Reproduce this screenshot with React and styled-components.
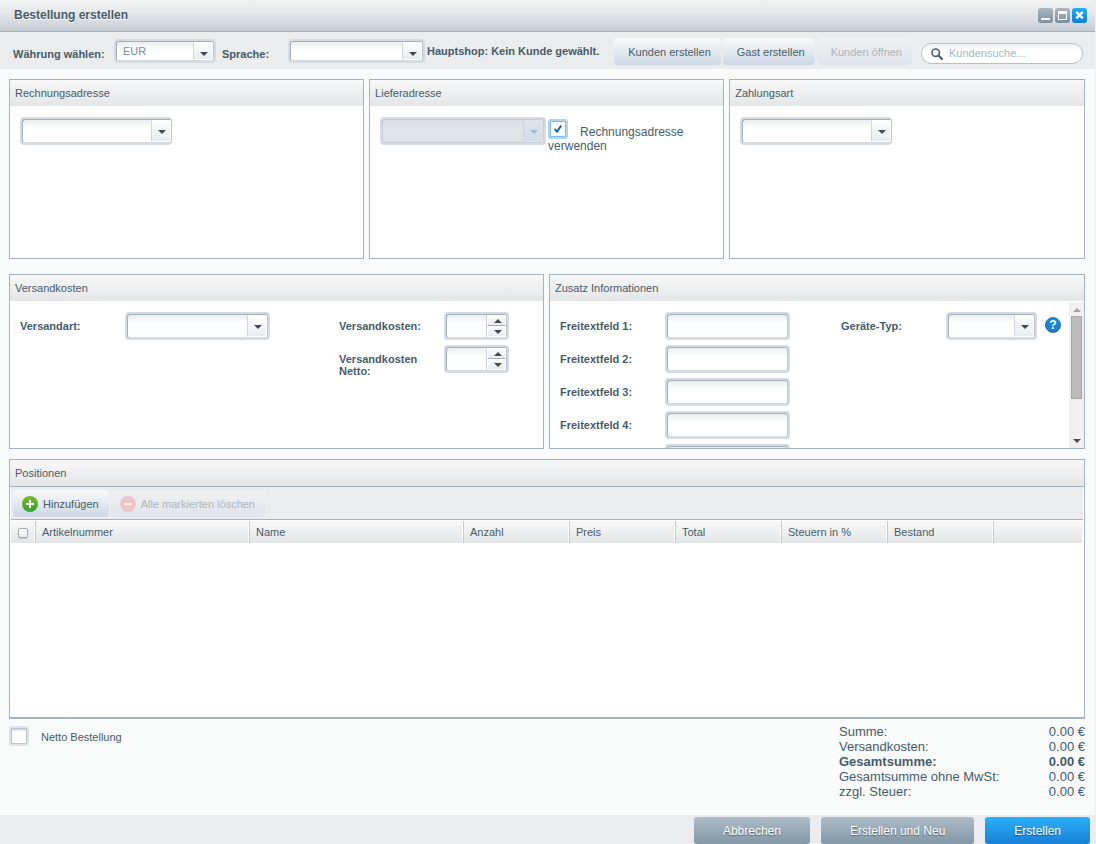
import { useState } from "react";
import styled, { createGlobalStyle, css } from "styled-components";

const columns = [
  { title: "Artikelnummer", width: 214 },
  { title: "Name", width: 214 },
  { title: "Anzahl", width: 106 },
  { title: "Preis", width: 106 },
  { title: "Total", width: 106 },
  { title: "Steuern in %", width: 106 },
  { title: "Bestand", width: 106 },
];

const totals = [
  { label: "Summe:", value: "0.00 €" },
  { label: "Versandkosten:", value: "0.00 €" },
  { label: "Gesamtsumme:", value: "0.00 €", strong: true },
  { label: "Gesamtsumme ohne MwSt:", value: "0.00 €" },
  { label: "zzgl. Steuer:", value: "0.00 €" },
];

const freeTexts = [1, 2, 3, 4];

const Arrow = ({ up }) => (
  <svg width="8" height="4" viewBox="0 0 8 4" aria-hidden="true">
    <path d={up ? "M0 4 L4 0 L8 4 Z" : "M0 0 L4 4 L8 0 Z"} fill="currentColor" />
  </svg>
);

const Combo = ({ id, label, width, small, open, disabled, children }) => (
  <Frame $width={width} $small={small} $open={open} $disabled={disabled}>
    <Select id={id} aria-label={label} disabled={disabled}>
      {children || <option value=""></option>}
    </Select>
    <Trigger $small={small} $disabled={disabled}>
      <Arrow />
    </Trigger>
  </Frame>
);

const Spinner = ({ id }) => {
  const [value, setValue] = useState("");
  const step = (n) => setValue(String((Number(value) || 0) + n));

  return (
    <Frame $width={65}>
      <Input id={id} value={value} onChange={(e) => setValue(e.target.value)} />
      <Steps>
        <Step type="button" aria-label="Erhöhen" onClick={() => step(1)}>
          <Arrow up />
        </Step>
        <Step type="button" aria-label="Verringern" onClick={() => step(-1)}>
          <Arrow />
        </Step>
      </Steps>
    </Frame>
  );
};

const PlusIcon = () => (
  <svg width="16" height="16" viewBox="0 0 16 16" aria-hidden="true">
    <defs>
      <linearGradient id="plus" x1="0" y1="0" x2="0" y2="1">
        <stop offset="0" stopColor="#7fb92f" />
        <stop offset="1" stopColor="#33a02f" />
      </linearGradient>
    </defs>
    <circle cx="8" cy="8" r="8" fill="url(#plus)" />
    <path d="M8 4v8M4 8h8" stroke="#fff" strokeWidth="2" />
  </svg>
);

const MinusIcon = () => (
  <svg width="16" height="16" viewBox="0 0 16 16" aria-hidden="true">
    <circle cx="8" cy="8" r="8" fill="#ecc6c9" />
    <path d="M4 8h8" stroke="#f7ecee" strokeWidth="2" />
  </svg>
);

const SearchIcon = () => (
  <svg width="12" height="12" viewBox="0 0 12 12" aria-hidden="true">
    <circle cx="4.7" cy="4.7" r="3.7" fill="none" stroke="#52616e" strokeWidth="1.7" />
    <path d="M7.4 7.4 L11 11" stroke="#52616e" strokeWidth="2.2" strokeLinecap="round" />
  </svg>
);

export default function App() {
  const [sameAddress, setSameAddress] = useState(true);

  return (
    <>
      <GlobalStyle />
      <Window>
        <TitleBar>
          <Title>Bestellung erstellen</Title>
          <Tools>
            <Tool type="button" aria-label="Minimieren">
              <svg width="15" height="15" viewBox="0 0 15 15">
                <path d="M3 10h9v2H3z" fill="#fff" />
              </svg>
            </Tool>
            <Tool type="button" aria-label="Maximieren">
              <svg width="15" height="15" viewBox="0 0 15 15">
                <path d="M3 3h9v9H3z M4 6v5h7V6z" fill="#fff" fillRule="evenodd" />
              </svg>
            </Tool>
            <Tool type="button" aria-label="Schließen" $primary>
              <svg width="15" height="15" viewBox="0 0 15 15">
                <path d="M4.3 3.8 L10.7 10.4 M10.7 3.8 L4.3 10.4" stroke="#fff" strokeWidth="2.4" />
              </svg>
            </Tool>
          </Tools>
        </TitleBar>

        <Toolbar>
          <ToolbarLabel htmlFor="currency" $width={101}>
            Währung wählen:
          </ToolbarLabel>
          <Combo id="currency" width={102} small>
            <option>EUR</option>
          </Combo>
          <ToolbarLabel htmlFor="language" $width={66} $indent>
            Sprache:
          </ToolbarLabel>
          <Combo id="language" width={137} small />
          <ShopInfo>Hauptshop: Kein Kunde gewählt.</ShopInfo>
          <CustomerActions>
            <SoftButton type="button">Kunden erstellen</SoftButton>
            <SoftButton type="button">Gast erstellen</SoftButton>
            <SoftButton type="button" disabled>
              Kunden öffnen
            </SoftButton>
          </CustomerActions>
          <Search>
            <SearchIcon />
            <input type="text" aria-label="Kundensuche" placeholder="Kundensuche..." />
          </Search>
        </Toolbar>

        <Main>
          <AddressRow>
            <Panel>
              <PanelTitle>Rechnungsadresse</PanelTitle>
              <PanelBody>
                <Combo label="Rechnungsadresse" width={152} open />
              </PanelBody>
            </Panel>
            <Panel>
              <PanelTitle>Lieferadresse</PanelTitle>
              <PanelBody>
                <Combo label="Lieferadresse" width={166} disabled={sameAddress} />
                <SameAddress>
                  <Check
                    type="checkbox"
                    checked={sameAddress}
                    onChange={(e) => setSameAddress(e.target.checked)}
                  />
                  Rechnungsadresse verwenden
                </SameAddress>
              </PanelBody>
            </Panel>
            <Panel>
              <PanelTitle>Zahlungsart</PanelTitle>
              <PanelBody>
                <Combo label="Zahlungsart" width={152} open />
              </PanelBody>
            </Panel>
          </AddressRow>

          <DetailRow>
            <Panel>
              <PanelTitle>Versandkosten</PanelTitle>
              <FormBody $second={195}>
                <Fields>
                  <Field>
                    <FieldLabel htmlFor="dispatch">Versandart:</FieldLabel>
                    <Combo id="dispatch" width={145} />
                  </Field>
                </Fields>
                <Fields>
                  <Field>
                    <FieldLabel htmlFor="shipping">Versandkosten:</FieldLabel>
                    <Spinner id="shipping" />
                  </Field>
                  <Field>
                    <FieldLabel htmlFor="shippingNet">Versandkosten Netto:</FieldLabel>
                    <Spinner id="shippingNet" />
                  </Field>
                </Fields>
              </FormBody>
            </Panel>
            <Panel>
              <PanelTitle>Zusatz Informationen</PanelTitle>
              <ScrollArea>
                <FormBody $second={220} $scroll>
                  <Fields>
                    {freeTexts.map((n) => (
                      <Field key={n}>
                        <FieldLabel htmlFor={`free${n}`}>Freitextfeld {n}:</FieldLabel>
                        <Frame $width={125}>
                          <Input id={`free${n}`} />
                        </Frame>
                      </Field>
                    ))}
                    <Field>
                      <FieldLabel as="span" />
                      <Frame $width={125}>
                        <Input aria-label="Freitextfeld 5" />
                      </Frame>
                    </Field>
                  </Fields>
                  <Fields>
                    <Field>
                      <FieldLabel htmlFor="device">Geräte-Typ:</FieldLabel>
                      <Combo id="device" width={91} />
                      <Help type="button" aria-label="Hilfe">
                        ?
                      </Help>
                    </Field>
                  </Fields>
                </FormBody>
                <ScrollBar aria-hidden="true">
                  <ScrollEnd $muted>
                    <Arrow up />
                  </ScrollEnd>
                  <Thumb />
                  <ScrollEnd $last>
                    <Arrow />
                  </ScrollEnd>
                </ScrollBar>
              </ScrollArea>
            </Panel>
          </DetailRow>

          <Positions>
            <PanelTitle $line>Positionen</PanelTitle>
            <GridToolbar>
              <SoftButton type="button" $icon>
                <PlusIcon />
                Hinzufügen
              </SoftButton>
              <SoftButton type="button" $icon disabled>
                <MinusIcon />
                Alle markierten löschen
              </SoftButton>
            </GridToolbar>
            <Table>
              <colgroup>
                <col width="24" />
                {columns.map((c) => (
                  <col key={c.title} width={c.width} />
                ))}
                <col />
              </colgroup>
              <thead>
                <tr>
                  <Th $check>
                    <SelectAll type="checkbox" aria-label="Alle markieren" />
                  </Th>
                  {columns.map((c) => (
                    <Th key={c.title}>{c.title}</Th>
                  ))}
                  <Th as="td" />
                </tr>
              </thead>
            </Table>
          </Positions>

          <Summary>
            <NetOrder>
              <Check type="checkbox" />
              Netto Bestellung
            </NetOrder>
            <Totals>
              {totals.map((t) => (
                <Total key={t.label} $strong={t.strong}>
                  <dt>{t.label}</dt>
                  <dd>{t.value}</dd>
                </Total>
              ))}
            </Totals>
          </Summary>
        </Main>

        <Footer>
          <ActionButton type="button">Abbrechen</ActionButton>
          <ActionButton type="button">Erstellen und Neu</ActionButton>
          <ActionButton type="button" $primary>
            Erstellen
          </ActionButton>
        </Footer>
      </Window>
    </>
  );
}

const GlobalStyle = createGlobalStyle`
  * {
    box-sizing: border-box;
  }

  body {
    margin: 0;
    background: #f9fbfa;
    color: #475c6a;
    font-family: "Liberation Sans", Arial, sans-serif;
    font-size: 11px;
  }

  button,
  input,
  select {
    margin: 0;
    font: inherit;
    color: inherit;
  }
`;

const Window = styled.div`
  min-height: 100vh;
  display: flex;
  flex-direction: column;
  border-right: 1px solid #eceeef;
`;

const TitleBar = styled.header`
  height: 32px;
  padding: 0 8px 0 14px;
  display: flex;
  justify-content: space-between;
  align-items: center;
  border-bottom: 1px solid #9fb1be;
  background: linear-gradient(#f1f2f2, #e6e8ea 40%, #c4cdd5);
`;

const Title = styled.h1`
  margin: 0;
  padding-bottom: 2px;
  font-size: 12px;
  line-height: 14px;
  text-shadow: 0 1px 0 #fff;
`;

const Tools = styled.div`
  display: flex;
  gap: 2px;
`;

const Tool = styled.button`
  width: 15px;
  height: 15px;
  padding: 0;
  border: 0;
  border-radius: 3px;
  background: ${({ $primary }) =>
    $primary ? "linear-gradient(#1fb0fa, #0a7fd8)" : "linear-gradient(#a9b7c2, #7c909f)"};

  svg {
    display: block;
  }
`;

const Toolbar = styled.div`
  height: 37px;
  padding: 6px 12px 0 13px;
  display: flex;
  align-items: flex-start;
  background: #ebecee;
`;

const ToolbarLabel = styled.label`
  width: ${({ $width, $indent }) => ($indent ? $width + 6 : $width)}px;
  padding-left: ${({ $indent }) => ($indent ? 6 : 0)}px;
  margin-top: 10px;
  flex: none;
  font-weight: bold;
  line-height: 12px;
`;

const ShopInfo = styled.strong`
  padding-left: 2px;
  line-height: 26px;
  white-space: nowrap;
`;

const CustomerActions = styled.div`
  margin-left: auto;
  display: flex;
  gap: 2px;
`;

const SoftButton = styled.button`
  height: 27px;
  padding: ${({ $icon }) => ($icon ? "0 10px 0 9px" : "0 10px 0 14px")};
  display: flex;
  align-items: center;
  gap: 5px;
  border: 0;
  border-radius: 4px;
  white-space: nowrap;
  background: linear-gradient(#f8f9fa, #e4e9ef 50%, #cbd7e5);

  &:disabled {
    color: #b0b4b8;
    background: linear-gradient(#f0f1f3, #dfe4eb);
  }
`;

const Search = styled.div`
  width: 162px;
  height: 21px;
  margin: 5px 0 0 9px;
  padding: 0 9px;
  display: flex;
  align-items: center;
  gap: 6px;
  border: 1px solid #b3c0ca;
  border-radius: 11px;
  background: linear-gradient(#eef1f2, #fff 6px);

  svg {
    flex: none;
  }

  input {
    width: 100%;
    min-width: 0;
    padding: 0 0 2px;
    border: 0;
    outline: 0;
    background: none;
  }

  input::placeholder {
    color: #a3b7c5;
    opacity: 1;
  }
`;

/* grey ring around every text field, combo and spinner */
const Frame = styled.span`
  width: ${({ $width }) => $width}px;
  height: ${({ $small }) => ($small ? 24 : 28)}px;
  margin-top: ${({ $small }) => ($small ? 1 : 0)}px;
  flex: none;
  display: grid;
  grid-template-columns: minmax(0, 1fr);
  border: 2px solid #d6dbe2;
  border-right-width: ${({ $open }) => ($open ? 0 : 2)}px;
  border-radius: 4px;
  background: #d6dbe2;

  & > input,
  & > select,
  & > span {
    grid-area: 1 / 1;
  }
`;

const field = css`
  width: 100%;
  height: 100%;
  padding: 0 6px;
  border: 1px solid #a3b0bb;
  border-right-color: #bcc5cd;
  border-bottom-color: #d6dbe2;
  border-radius: 3px;
  outline: 0;
  color: #7690a4;
  background: linear-gradient(#ebeeee, #fdfefe 8px, #fff);
`;

const Input = styled.input`
  ${field}
`;

const Select = styled.select`
  ${field}
  appearance: none;

  &:disabled {
    border-color: #c6cdd5;
    opacity: 1;
    background: linear-gradient(#dadfe4, #dfe4e9 8px, #dfe4e9);
  }
`;

const Trigger = styled.span`
  width: 20px;
  margin: 1px 1px 1px 0;
  padding: ${({ $small }) => ($small ? 5 : 2)}px 0 0 2px;
  justify-self: end;
  display: flex;
  justify-content: center;
  align-items: center;
  border: 1px solid #fff;
  border-left-color: #cfd5db;
  border-radius: 0 2px 2px 0;
  pointer-events: none;
  color: #3f4b56;
  background: linear-gradient(#fdfdfd, #e9ebed);

  ${({ $disabled }) =>
    $disabled &&
    css`
      border-color: #dde4ea;
      border-left-color: #cdd5dd;
      color: #a0b8cf;
      background: linear-gradient(#dee3e8, #d2dde9);
    `}
`;

const Steps = styled.span`
  width: 20px;
  margin: 1px 1px 1px 0;
  justify-self: end;
  display: grid;
  grid-template-rows: 1fr 1fr;
  border-left: 1px solid #cfd5db;
`;

const Step = styled.button`
  padding: 0 0 0 2px;
  display: flex;
  justify-content: center;
  align-items: center;
  border: 1px solid #fff;
  color: #3f4b56;
  background: linear-gradient(#fdfdfd, #e9ebed);

  &:first-child {
    border-bottom-color: #a3b0bb;
  }
`;

const Check = styled.input`
  appearance: none;
  width: 20px;
  height: 20px;
  flex: none;
  border: 2px solid #dfe2e6;
  border-radius: 3px;
  box-shadow: inset 0 0 0 1px #bdc6ce, inset 0 2px 2px #c3cbd2;
  background: #fff center / 8px 8px no-repeat;

  &:checked {
    border-color: #acd6f7;
    box-shadow: inset 0 0 0 1px #7dbdf0;
    background-image: url("data:image/svg+xml,%3Csvg xmlns='http://www.w3.org/2000/svg' viewBox='0 0 8 8'%3E%3Cpath d='M.6 4 L3 6.6 L7.2 .6' fill='none' stroke='%231568a8' stroke-width='2'/%3E%3C/svg%3E");
  }
`;

const Main = styled.main`
  flex: 1;
  padding: 10px 10px 0 9px;
  display: flex;
  flex-direction: column;
`;

const AddressRow = styled.div`
  display: grid;
  grid-template-columns: 33% 33% 1fr;
  gap: 5px;
  margin-bottom: 15px;
`;

const DetailRow = styled.div`
  display: grid;
  grid-template-columns: calc(50% - 3px) 1fr;
  gap: 5px;
  margin-bottom: 10px;
`;

const Panel = styled.section`
  min-width: 0;
  border: 1px solid #a3b3c0;
  background: #fff;
`;

const PanelTitle = styled.h2`
  height: 27px;
  margin: 0;
  padding: 0 5px;
  font-size: 11px;
  font-weight: normal;
  line-height: 26px;
  border-bottom: 1px solid ${({ $line }) => ($line ? "#a3b3c0" : "#fff")};
  background: linear-gradient(#f8f8f8, #e3e5e7);
`;

const PanelBody = styled.div`
  min-height: 151px;
  padding: 10px;
  display: flex;
  align-items: flex-start;
`;

const SameAddress = styled.label`
  padding: 2px 0 0 2px;
  font-size: 12px;
  line-height: 14px;

  input {
    margin-right: 12px;
    vertical-align: bottom;
  }
`;

const FormBody = styled.div`
  height: 146px;
  flex: 1;
  padding: 10px ${({ $scroll }) => ($scroll ? 8 : 9)}px 10px 10px;
  display: grid;
  grid-template-columns: minmax(0, 1fr) ${({ $second }) => $second}px;
  align-items: start;
  overflow-y: auto;
  scrollbar-width: none;
`;

const Fields = styled.div`
  display: grid;
  gap: 5px;
`;

const Field = styled.div`
  display: flex;
  align-items: flex-start;
`;

const FieldLabel = styled.label`
  width: 105px;
  padding: 8px 20px 0 0;
  flex: none;
  font-weight: bold;
  line-height: 12px;
`;

const Help = styled.button`
  width: 16px;
  height: 16px;
  margin: 5px 0 0 8px;
  padding: 0;
  border: 1px solid #1c6fb0;
  border-radius: 50%;
  color: #fff;
  font-size: 12px;
  font-weight: bold;
  line-height: 14px;
  background: linear-gradient(#0b93ee, #2379bb);
`;

const ScrollArea = styled.div`
  display: flex;
`;

const ScrollBar = styled.div`
  width: 15px;
  display: flex;
  flex-direction: column;
  background: #f0f0f0;
`;

const ScrollEnd = styled.span`
  height: 14px;
  margin-top: ${({ $last }) => ($last ? "auto" : 0)};
  padding-top: ${({ $last }) => ($last ? 0 : 2)}px;
  display: flex;
  justify-content: center;
  align-items: center;
  color: ${({ $muted }) => ($muted ? "#a3a3a3" : "#4d4d4d")};
`;

const Thumb = styled.span`
  height: 83px;
  margin: 0 2px;
  border: 1px solid #a6a6a6;
  background: #bcbcbc;
`;

const Positions = styled(Panel)`
  flex: 1;
  min-height: 200px;
  border-bottom-width: 2px;
`;

const GridToolbar = styled.div`
  height: 33px;
  margin: 0 1px;
  padding: 3px 2px;
  display: flex;
  gap: 2px;
  border-bottom: 1px solid #a3b3c0;
  background: #ebecee;
`;

const Table = styled.table`
  width: calc(100% - 2px);
  margin: 1px 1px 0;
  table-layout: fixed;
  border-collapse: separate;
  border-spacing: 0;
`;

const Th = styled.th`
  height: 22px;
  padding: ${({ $check }) => ($check ? "2px 0 0 7px" : "0 6px")};
  border-left: ${({ $check }) => ($check ? 0 : "1px solid #c5c9cd")};
  border-right: 1px solid #fff;
  font-weight: normal;
  text-align: left;
  background: linear-gradient(#f9f9f9, #e3e4e6);
`;

const SelectAll = styled.input`
  appearance: none;
  display: block;
  width: 10px;
  height: 10px;
  border: 1px solid #a4a8ab;
  border-radius: 2px;
  box-shadow: 0 1px 1px #c4c6c8;
  background: linear-gradient(#fff, #e8e9ea);

  &:checked {
    background: #7c909f;
  }
`;

const Summary = styled.div`
  min-height: 96px;
  padding-top: 5px;
  display: flex;
  justify-content: space-between;
  align-items: flex-start;
`;

const NetOrder = styled.label`
  margin-top: 2px;
  display: flex;
  align-items: flex-start;
  gap: 12px;
  line-height: 22px;
`;

const Totals = styled.dl`
  width: 246px;
  margin: 0;
  font-size: 13px;
  line-height: 15px;
`;

const Total = styled.div`
  display: flex;
  justify-content: space-between;
  font-weight: ${({ $strong }) => ($strong ? "bold" : "normal")};

  dd {
    margin: 0;
  }
`;

const Footer = styled.footer`
  padding: 2px 5px 0;
  display: flex;
  justify-content: flex-end;
  gap: 11px;
  background: #ebecee;
`;

const ActionButton = styled.button`
  height: 27px;
  padding: 0 29px;
  border: 0;
  border-radius: 3px;
  color: #fff;
  font-size: 12px;
  text-shadow: 0 1px 1px rgba(0, 0, 0, 0.4);
  background: ${({ $primary }) =>
    $primary ? "linear-gradient(#2bb0f8, #1780d8)" : "linear-gradient(#adbcc7, #8297a6)"};
`;
